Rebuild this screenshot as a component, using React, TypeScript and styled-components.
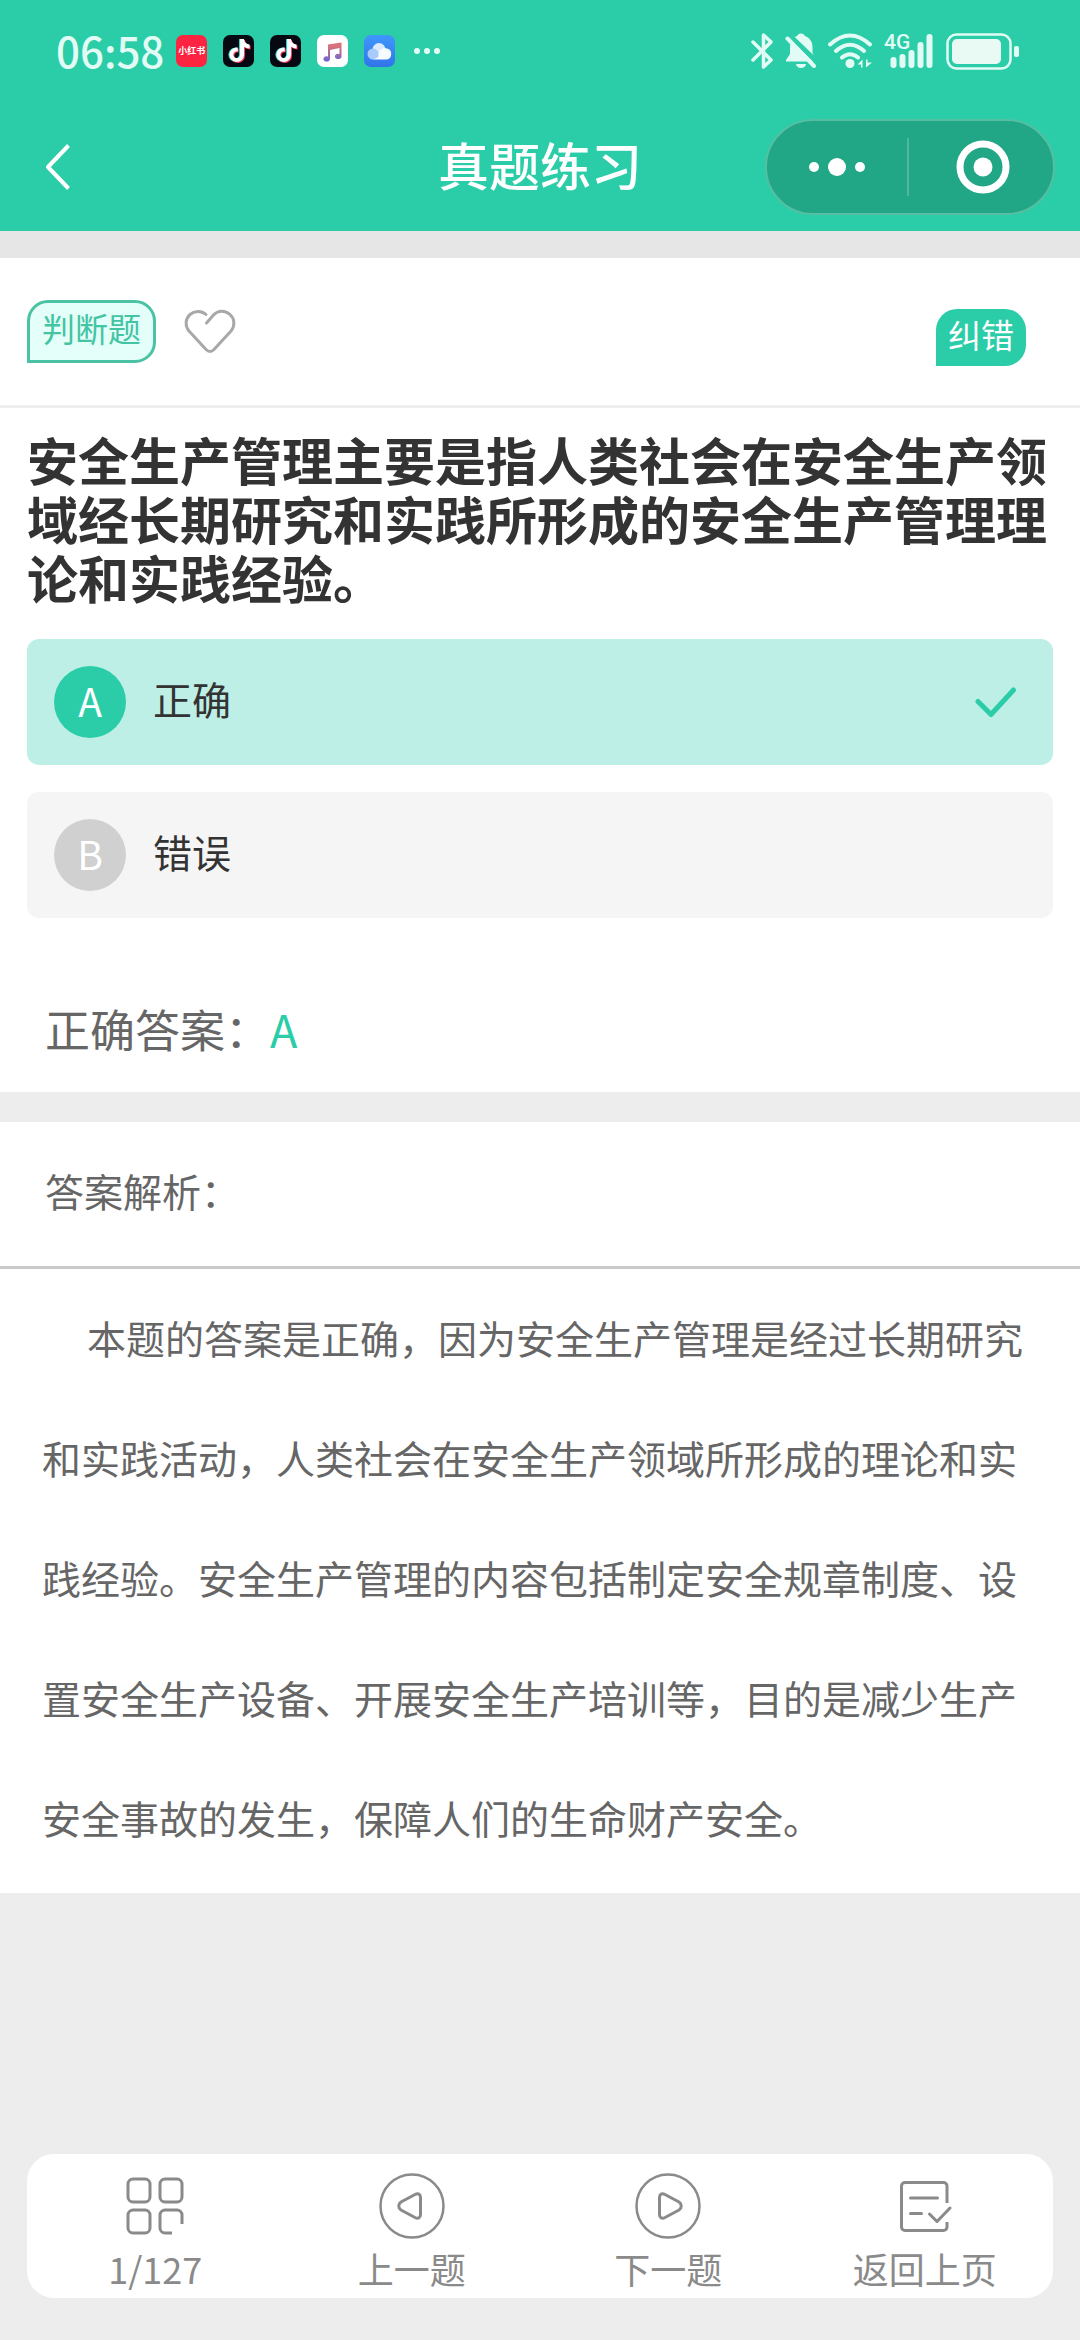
import React from 'react';
import styled, { createGlobalStyle } from 'styled-components';
import { FaTiktok } from 'react-icons/fa6';

const green = '#2acda8';
const frost = '#e2fcf5';

const GlobalStyle = createGlobalStyle`
  *, *::before, *::after { box-sizing: border-box; }
  body {
    margin: 0;
    background: #ededed;
    color: #333;
    font-family: "Noto Sans CJK SC", "Noto Sans", sans-serif;
  }
  button {
    margin: 0;
    padding: 0;
    border: 0;
    background: none;
    color: inherit;
    font: inherit;
    cursor: pointer;
  }
  svg { display: block; flex: none; }
  h1, h2, p { margin: 0; font-weight: 400; }
`;

const Page = styled.div`
  min-height: 100vh;
  display: flex;
  flex-direction: column;
`;

const Header = styled.header`
  background: ${green};
  color: #fff;
`;

const StatusBar = styled.div`
  display: flex;
  align-items: center;
  justify-content: space-between;
  height: 102px;
  padding: 0 61px 0 56px;
  color: ${frost};
`;

const StatusGroup = styled.div<{ $gap: number }>`
  display: flex;
  align-items: center;
  gap: ${(p) => p.$gap}px;
`;

const Clock = styled.time`
  padding-bottom: 2px;
  font-size: 42px;
  font-weight: 500;
  line-height: 48px;
`;

const AppBadge = styled.span<{ $bg: string }>`
  display: flex;
  align-items: center;
  justify-content: center;
  width: 31px;
  height: 32px;
  border-radius: 7px;
  background: ${(p) => p.$bg};
  color: #fff;
  font-size: 9px;
  font-weight: 700;
  line-height: 12px;
  white-space: nowrap;
`;

const NavBar = styled.nav`
  display: grid;
  grid-template-columns: 1fr auto 1fr;
  align-items: center;
  height: 129px;
  padding: 0 25px;
`;

const BackButton = styled.button`
  justify-self: start;
  padding: 16px 20px;
`;

const Title = styled.h1`
  padding-bottom: 6px;
  font-size: 51px;
  font-weight: 500;
  line-height: 66px;
`;

const Capsule = styled.div`
  justify-self: end;
  display: flex;
  align-items: center;
  width: 290px;
  height: 96px;
  border: 2px solid #56bfa2;
  border-radius: 48px;
  background: #21a686;
`;

const CapsuleButton = styled.button`
  flex: 1;
  display: flex;
  align-items: center;
  justify-content: center;
  height: 58px;
  & + & {
    padding-left: 4px;
    border-left: 2px solid #4db89e;
  }
`;

const Question = styled.section`
  border-top: 27px solid #e6e6e6;
  background: #fff;
`;

const TagRow = styled.div`
  display: flex;
  align-items: center;
  height: 150px;
  padding: 0 54px 0 27px;
  border-bottom: 3px solid #eee;
`;

const TypeTag = styled.span`
  padding: 4px 12px 11px;
  border: 3px solid #4bc2a3;
  border-radius: 21px 21px 21px 0;
  background: #e4fefa;
  color: #43c5a3;
  font-size: 33px;
  line-height: 42px;
`;

const HeartButton = styled.button`
  margin-left: 28px;
`;

const ReportButton = styled.button`
  margin: 12px 0 0 auto;
  padding: 4px 12px 11px;
  border-radius: 21px 21px 21px 0;
  background: ${green};
  color: #fff;
  font-size: 33px;
  line-height: 42px;
`;

const Stem = styled.h2`
  padding: 22px 27px 32px;
  font-size: 51px;
  font-weight: 700;
  line-height: 59px;
`;

const Options = styled.div`
  display: flex;
  flex-direction: column;
  gap: 27px;
  padding: 0 27px;
`;

const OptionButton = styled.button<{ $chosen: boolean }>`
  display: flex;
  align-items: center;
  gap: 27px;
  padding: 27px 36px 27px 27px;
  border-radius: 12px;
  background: ${(p) => (p.$chosen ? '#bdefe6' : '#f5f5f5')};
  font-size: 39px;
  line-height: 60px;
  text-align: left;
`;

const Letter = styled.span<{ $chosen: boolean }>`
  width: 72px;
  height: 72px;
  border-radius: 50%;
  background: ${(p) => (p.$chosen ? green : '#d0d0d0')};
  color: #fff;
  line-height: 68px;
  text-align: center;
`;

const OptionText = styled.span`
  flex: 1;
  padding-bottom: 8px;
`;

const Answer = styled.p`
  padding: 78px 45px 30px;
  color: #666;
  font-size: 45px;
  line-height: 66px;
`;

const AnswerKey = styled.span`
  color: ${green};
`;

const Analysis = styled.section`
  margin-top: 30px;
  background: #fff;
  color: #666;
  font-size: 39px;
`;

const AnalysisTitle = styled.h2`
  padding: 0 45px 8px;
  border-bottom: 3px solid #c9c9c9;
  font-size: 39px;
  line-height: 136px;
`;

const AnalysisBody = styled.p`
  padding: 8px 42px 16px;
  line-height: 120px;
  text-indent: 45px;
`;

const Toolbar = styled.footer`
  display: grid;
  grid-template-columns: repeat(4, 1fr);
  margin: auto 27px 42px;
  border-radius: 27px;
  background: #fff;
`;

const ToolButton = styled.button`
  display: flex;
  flex-direction: column;
  align-items: center;
  gap: 9px;
  padding: 19px 0 10px;
  color: #8a8a8a;
  font-size: 36px;
  line-height: 40px;
`;

const DouyinIcon = () => (
  <AppBadge $bg="#060912">
    <svg width="31" height="32" viewBox="0 0 31 32">
      <FaTiktok x={4} y={4} size={23} color="#35e6e0" />
      <FaTiktok x={6} y={5} size={23} color="#f2385a" />
      <FaTiktok x={5} y={4} size={23} color="#fff" />
    </svg>
  </AppBadge>
);

const MusicIcon = () => (
  <AppBadge $bg="#fff">
    <svg width="31" height="32" viewBox="0 0 31 32">
      <defs>
        <linearGradient id="note" x1="0" y1="0" x2="0" y2="1">
          <stop offset="0.2" stopColor="#d9727a" />
          <stop offset="1" stopColor="#6a63d6" />
        </linearGradient>
      </defs>
      <path
        fill="url(#note)"
        d="M11 9.500 24.500 7.500V21.500a3.300 2.600 0 1 1-2-2.400V13L13 15v9a3.300 2.600 0 1 1-2-2.400Z"
      />
    </svg>
  </AppBadge>
);

const CloudIcon = () => (
  <AppBadge $bg="linear-gradient(#3f97fa, #3274ea)">
    <svg width="31" height="32" viewBox="0 0 31 32">
      <circle cx="15" cy="14.500" r="6.500" fill="#dceafe" />
      <circle cx="9" cy="19" r="5.500" fill="#a9cbfb" />
      <path d="M9 24.500a9 9 0 0 0 6-4 6 6 0 0 1 8-7 5.600 5.600 0 0 1-1 11Z" fill="#f7fbff" />
    </svg>
  </AppBadge>
);

const BluetoothIcon = () => (
  <svg width="22" height="36" viewBox="0 0 22 36" fill="none" stroke="currentColor" strokeWidth="3.500" strokeLinecap="round" strokeLinejoin="round">
    <path d="M2 9 20 27 12.500 34V2L20 9 2 27" />
  </svg>
);

const MutedBellIcon = () => (
  <svg width="31" height="36" viewBox="0 0 31 36">
    <path fill="currentColor" d="M12 3a4.500 4.500 0 0 1 8 0c5 2 7.500 6 7.500 11v6l3 6v2.500H1V27l4-6v-7C5 9 7 5 12 3Z" />
    <path fill="currentColor" d="M11 31h10a5 4 0 0 1-10 0Z" />
    <path stroke={green} strokeWidth="5" d="M1-1 33 30" />
    <path stroke={green} strokeWidth="5" strokeLinecap="round" d="M1 3 6 9" />
    <path stroke="currentColor" strokeWidth="4" strokeLinecap="round" d="M2.500 5.500 29 33" />
  </svg>
);

const WifiIcon = () => (
  <svg width="44" height="36" viewBox="0 0 44 36" fill="none" stroke="currentColor" strokeWidth="4" strokeLinecap="round">
    <path d="M2 11.500Q22-6.500 42 11.500M8 18Q22 5.500 36 18M14 24.500Q22 18 30 24.500" />
    <circle cx="22" cy="30.500" r="4.500" fill="currentColor" stroke="none" />
    <path d="M29.500 31.500 34.500 26.500V34.500H33V31.500ZM38 26.500V34.500L44 29.500H39.500V26.500Z" fill="currentColor" stroke="none" />
  </svg>
);

const SignalIcon = () => (
  <svg width="50" height="48" viewBox="0 -6 50 48" stroke="currentColor" strokeWidth="6" strokeLinecap="round">
    <path d="M9.500 27V32M18.500 24V32M27.500 20V32M36.500 12V32M45.500 4V32" />
    <text x="0" y="16" fill="currentColor" stroke="none" fontSize="21" fontFamily="Roboto, sans-serif" fontWeight="500">4G</text>
  </svg>
);

const BatteryIcon = () => (
  <svg width="73" height="37" viewBox="0 0 73 37">
    <rect x="1.500" y="1.500" width="63" height="34" rx="9" fill="none" stroke="currentColor" strokeWidth="2.500" />
    <rect x="6" y="6" width="49" height="25" rx="5" fill="#e9faf5" />
    <rect x="68" y="13" width="5" height="11" rx="2" fill="currentColor" />
  </svg>
);

const GridIcon = () => (
  <svg width="66" height="66" viewBox="0 0 66 66" fill="none" stroke="currentColor" strokeWidth="3" strokeLinecap="butt">
    <rect x="6" y="6" width="22" height="23" rx="5" />
    <rect x="38" y="6" width="22" height="23" rx="5" />
    <rect x="6" y="37" width="22" height="23" rx="5" />
    <path d="M60 51V42a5 5 0 0 0-5-5H43a5 5 0 0 0-5 5V55a5 5 0 0 0 5 5H50" />
  </svg>
);

const PlayIcon = ({ back }: { back?: boolean }) => (
  <svg width="66" height="66" viewBox="0 0 66 66" fill="none" stroke="currentColor" strokeWidth="2.500">
    <circle cx="33" cy="33" r="31.500" />
    <path
      strokeWidth="3"
      transform={back ? 'translate(66 0) scale(-1 1)' : undefined}
      d="M24.500 24.500V41.500C24.500 45 27 46 30 44.500L44 37C47 35 47 31 44 29L30 21.500C27 20 24.500 21 24.500 24.500Z"
    />
  </svg>
);

const SheetIcon = () => (
  <svg width="66" height="66" viewBox="0 0 66 66" fill="none" stroke="currentColor" strokeWidth="3" strokeLinecap="round" strokeLinejoin="round">
    <path strokeLinecap="butt" d="M55 30V13a3.500 3.500 0 0 0-3.500-3.500H13A3.500 3.500 0 0 0 9.500 13V54A3.500 3.500 0 0 0 13 57.500H51.500A3.500 3.500 0 0 0 55 54V49" />
    <path d="M18.500 25H45.500M18.500 40.500H29.500M37.500 41 45 48.500 58 35" />
  </svg>
);

const options = [
  { letter: 'A', text: '正确', chosen: true },
  { letter: 'B', text: '错误', chosen: false },
];

const tools = [
  { label: '1/127', icon: <GridIcon /> },
  { label: '上一题', icon: <PlayIcon back /> },
  { label: '下一题', icon: <PlayIcon /> },
  { label: '返回上页', icon: <SheetIcon /> },
];

export default function App() {
  return (
    <Page lang="zh-CN">
      <GlobalStyle />
      <Header>
        <StatusBar>
          <StatusGroup $gap={12}>
            <Clock>06:58</Clock>
            <StatusGroup $gap={16}>
              <AppBadge $bg="#fd2442">小红书</AppBadge>
              <DouyinIcon />
              <DouyinIcon />
              <MusicIcon />
              <CloudIcon />
              <svg width="32" height="6" viewBox="0 0 32 6" fill="currentColor">
                <circle cx="6" cy="3" r="3" />
                <circle cx="16" cy="3" r="3" />
                <circle cx="26" cy="3" r="3" />
              </svg>
            </StatusGroup>
          </StatusGroup>
          <StatusGroup $gap={12}>
            <BluetoothIcon />
            <MutedBellIcon />
            <WifiIcon />
            <SignalIcon />
            <BatteryIcon />
          </StatusGroup>
        </StatusBar>
        <NavBar>
          <BackButton aria-label="返回">
            <svg width="25" height="46" viewBox="0 0 25 46" fill="none" stroke="currentColor" strokeWidth="4" strokeLinejoin="round">
              <path d="M23.500 1.500 3 23 23.500 44.500" />
            </svg>
          </BackButton>
          <Title>真题练习</Title>
          <Capsule>
            <CapsuleButton aria-label="更多">
              <svg width="56" height="18" viewBox="0 0 56 18" fill="currentColor">
                <circle cx="5" cy="9" r="5" />
                <circle cx="28" cy="9" r="9" />
                <circle cx="51" cy="9" r="5" />
              </svg>
            </CapsuleButton>
            <CapsuleButton aria-label="关闭">
              <svg width="54" height="54" viewBox="0 0 54 54">
                <circle cx="27" cy="27" r="23" fill="none" stroke="currentColor" strokeWidth="7" />
                <circle cx="27" cy="27" r="9.500" fill="currentColor" />
              </svg>
            </CapsuleButton>
          </Capsule>
        </NavBar>
      </Header>

      <Question>
        <TagRow>
          <TypeTag>判断题</TypeTag>
          <HeartButton aria-label="收藏">
            <svg width="52" height="46" viewBox="0 0 52 46" fill="none" stroke="#a8a8a8" strokeWidth="3" strokeLinecap="round" strokeLinejoin="round">
              <path d="M22 5.500C17 1 10 2 6 5.500 1 10 1 17 5 22L22 40.500Q26 44.500 30 40.500L47 22C51 17 51 10 46 5.500 41 1 34 1 29.500 6L22.500 14" />
            </svg>
          </HeartButton>
          <ReportButton>纠错</ReportButton>
        </TagRow>
        <Stem>安全生产管理主要是指人类社会在安全生产领域经长期研究和实践所形成的安全生产管理理论和实践经验。</Stem>
        <Options>
          {options.map((o) => (
            <OptionButton key={o.letter} $chosen={o.chosen} aria-pressed={o.chosen}>
              <Letter $chosen={o.chosen}>{o.letter}</Letter>
              <OptionText>{o.text}</OptionText>
              {o.chosen && (
                <svg width="42" height="32" viewBox="0 0 42 32" fill="none" stroke={green} strokeWidth="5" strokeLinecap="round" strokeLinejoin="round">
                  <path d="M3 15.500 16 28.500 38.500 4" />
                </svg>
              )}
            </OptionButton>
          ))}
        </Options>
        <Answer>
          正确答案：<AnswerKey>A</AnswerKey>
        </Answer>
      </Question>

      <Analysis>
        <AnalysisTitle>答案解析：</AnalysisTitle>
        <AnalysisBody>
          本题的答案是正确，因为安全生产管理是经过长期研究和实践活动，人类社会在安全生产领域所形成的理论和实践经验。安全生产管理的内容包括制定安全规章制度、设置安全生产设备、开展安全生产培训等，目的是减少生产安全事故的发生，保障人们的生命财产安全。
        </AnalysisBody>
      </Analysis>

      <Toolbar>
        {tools.map((t) => (
          <ToolButton key={t.label}>
            {t.icon}
            <span>{t.label}</span>
          </ToolButton>
        ))}
      </Toolbar>
    </Page>
  );
}
